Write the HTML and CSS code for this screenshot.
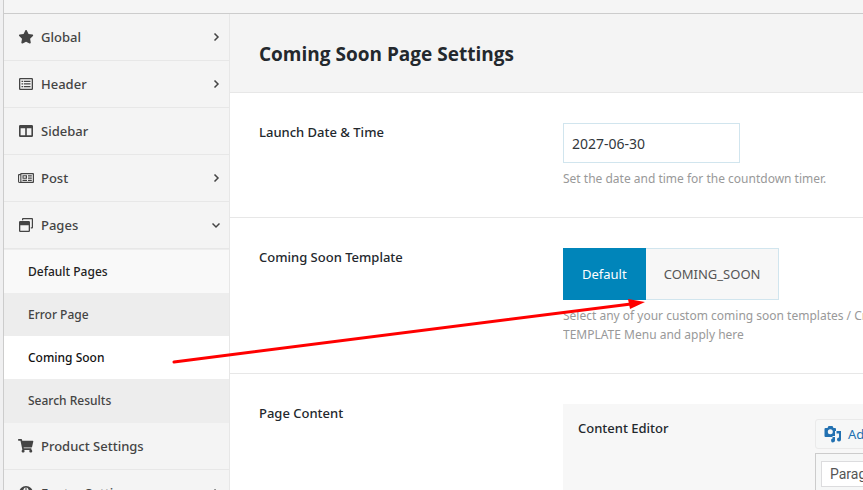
FILE: index.html
```html
<!DOCTYPE html>
<html lang="en">
<head>
    <meta charset="UTF-8">
    <meta name="viewport" content="width=device-width, initial-scale=1.0">
    <title>Coming Soon Page Settings</title>
    <link rel="stylesheet" href="styles.css">
</head>
<body>
    <div class="panel">
        <div class="topbar"></div>
        <div class="wrapper">
            <nav class="sidebar">
                <ul class="menu">
                    <li>
                        <a href="#">
                            <svg class="icon" viewBox="0 0 16 14"><path transform="translate(0.4 0) scale(0.0266)" d="M259.3 17.8L194 150.2 47.9 171.5c-26.2 3.8-36.7 36.1-17.7 54.6l105.7 103-25 145.5c-4.5 26.3 23.2 46 46.4 33.7L288 439.6l130.7 68.7c23.2 12.2 50.9-7.4 46.4-33.7l-25-145.5 105.7-103c19-18.5 8.5-50.8-17.7-54.6L382 150.2 316.7 17.8c-11.7-23.6-45.6-23.9-57.4 0z"/></svg>
                            Global
                            <svg class="arrow" viewBox="0 0 8 8"><path d="M2.5 0.500l3.500 3.500-3.500 3.500"/></svg>
                        </a>
                    </li>
                    <li>
                        <a href="#">
                            <svg class="icon" viewBox="0 0 16 14"><path fill-rule="evenodd" d="M2.2 1h11.6q1.2 0 1.2 1.2v9.6q0 1.2-1.2 1.2H2.2Q1 13 1 11.800V2.200Q1 1 2.200 1zM2.300 2.300v9.400h11.400V2.300zM3.500 3.700h1.700v1.300H3.500zM6 3.700h6.500v1.300H6zM3.500 6.300h1.700v1.300H3.500zM6 6.300h6.500v1.300H6zM3.500 9h1.700v1.300H3.500zM6 9h6.500v1.300H6z"/></svg>
                            Header
                            <svg class="arrow" viewBox="0 0 8 8"><path d="M2.5 0.500l3.500 3.500-3.500 3.500"/></svg>
                        </a>
                    </li>
                    <li>
                        <a href="#">
                            <svg class="icon" viewBox="0 0 16 14"><path fill-rule="evenodd" d="M2.300 1h11.400q1.300 0 1.300 1.300v9.400q0 1.300-1.300 1.300H2.300Q1 13 1 11.700V2.300Q1 1 2.300 1zM2.600 4.300v7h4.600v-7zM8.800 4.300v7h4.600v-7z"/></svg>
                            Sidebar
                        </a>
                    </li>
                    <li>
                        <a href="#">
                            <svg class="icon" viewBox="0 0 16 14"><path fill-rule="evenodd" d="M3 2h12q1 0 1 1v8q0 1-1 1H2Q0 12 0 10.500V4q0-1 1-1h1.200Q2.200 2 3 2zM3.400 3.200v7.600h11.400V3.200zM1.100 4.200v6.300q0 .6.600.6t.6-.6V4.200zM4.500 4.200H9v3.600H4.500zM5.600 5.200v1.500h2.200V5.200zM10 4.200h3.800v1.200H10zM10 6.600h3.800v1.200H10zM4.500 8.800H9v1.100H4.500zM10 8.800h3.800v1.100H10z"/></svg>
                            Post
                            <svg class="arrow" viewBox="0 0 8 8"><path d="M2.5 0.500l3.500 3.500-3.500 3.500"/></svg>
                        </a>
                    </li>
                    <li>
                        <a href="#">
                            <svg class="icon" viewBox="0 0 16 14"><path fill-rule="evenodd" d="M5 0h9q1 0 1 1v8.500q0 1-1 1h-1.200V9.300h1V1.200H5.200v1H4V1q0-1 1-1zM2.200 3h8.600Q12 3 12 4.200v8.600q0 1.200-1.200 1.200H2.200Q1 14 1 12.800V4.200Q1 3 2.200 3zM2.300 7.200v5.500h8.400V7.200z"/></svg>
                            Pages
                            <svg class="arrow" viewBox="0 0 8 8"><path d="M0.500 2.500l3.500 3.500 3.500-3.500"/></svg>
                        </a>
                        <ul class="submenu">
                            <li class="first"><a href="#">Default Pages</a></li>
                            <li><a href="#">Error Page</a></li>
                            <li class="active"><a href="#">Coming Soon</a></li>
                            <li><a href="#">Search Results</a></li>
                        </ul>
                    </li>
                    <li>
                        <a href="#">
                            <svg class="icon" viewBox="0 0 16 14"><path transform="scale(0.0266)" d="M528.12 301.319l47.273-208C578.806 78.301 567.391 64 551.99 64H159.208l-9.166-44.81C147.758 8.021 137.93 0 126.529 0H24C10.745 0 0 10.745 0 24v16c0 13.255 10.745 24 24 24h69.883l70.248 343.435C147.325 417.1 136 435.222 136 456c0 30.928 25.072 56 56 56s56-25.072 56-56c0-15.674-6.447-29.835-16.824-40h209.647C430.447 426.165 424 440.326 424 456c0 30.928 25.072 56 56 56s56-25.072 56-56c0-22.172-12.888-41.332-31.579-50.405l5.517-24.276c3.413-15.018-8.002-29.319-23.403-29.319H218.117l-6.545-32h293.145c11.206 0 20.92-7.754 23.403-18.681z"/></svg>
                            Product Settings
                        </a>
                    </li>
                    <li>
                        <a href="#">
                            <svg class="icon" viewBox="0 0 16 14"><path fill-rule="evenodd" d="M8 0a7 7 0 1 1 0 14A7 7 0 0 1 8 0zM7.500 1.200Q5.500 2 5 5h2.500zM8.500 1.200V5H11Q10.500 2 8.500 1.200z"/></svg>
                            Footer Settings
                            <svg class="arrow" viewBox="0 0 8 8"><path d="M2.5 0.500l3.500 3.500-3.500 3.500"/></svg>
                        </a>
                    </li>
                </ul>
            </nav>
            <main class="content">
                <div class="title">
                    <h1>Coming Soon Page Settings</h1>
                </div>
                <div class="field">
                    <label class="field-label" for="launchDate">Launch Date &amp; Time</label>
                    <div class="field-body">
                        <input type="text" class="date" id="launchDate" value="2027-06-30">
                        <p class="desc">Set the date and time for the countdown timer.</p>
                    </div>
                </div>
                <div class="field">
                    <div class="field-label" id="templateLabel">Coming Soon Template</div>
                    <div class="field-body">
                        <div class="button-set" role="group" aria-labelledby="templateLabel">
                            <button type="button" class="selected">Default</button>
                            <button type="button">COMING_SOON</button>
                        </div>
                        <p class="desc">Select any of your custom coming soon templates / Create<br>TEMPLATE Menu and apply here</p>
                    </div>
                </div>
                <div class="field">
                    <div class="field-label">Page Content</div>
                    <div class="field-body editor-box">
                        <label class="editor-label" for="format">Content Editor</label>
                        <div class="editor">
                            <button type="button" class="add-media">
                                <svg viewBox="0 0 18 18"><path fill-rule="evenodd" d="M1.500 3h2l1-2h4l1 2h1.500q1 0 1 1v2H11v6H1.500q-1 0-1-1V4q0-1 1-1zM6.300 4.200a2.500 2.500 0 1 0 0 5 2.500 2.500 0 0 0 0-5zM12.500 6H17v8.500a2 2 0 1 1-2-2V8.500h-2.500zM8.500 11H11v4a2 2 0 1 1-2.500-1.500z"/></svg>
                                Add Media
                            </button>
                            <div class="toolbar">
                                <select id="format">
                                    <option>Paragraph</option>
                                </select>
                            </div>
                        </div>
                    </div>
                </div>
            </main>
        </div>
        <!-- pointer from the menu item to the template buttons -->
        <svg class="pointer" viewBox="0 0 476 68">
            <path class="line" d="M3 64L460 6"/>
            <path class="head" d="M474 4L457 1L459 11z"/>
        </svg>
    </div>
</body>
</html>
```
FILE: styles.css
```css
* {
    box-sizing: border-box;
}
body {
    margin: 0;
    height: 100vh;
    overflow: hidden;
    background-color: #f0f0f1;
    font-family: "Segoe UI", "Noto Sans", sans-serif;
    font-size: 13px;
    color: #23282d;
}
ul {
    list-style: none;
    margin: 0;
    padding: 0;
}
a {
    color: inherit;
    text-decoration: none;
}
.panel {
    display: flex;
    flex-direction: column;
    position: relative;
    height: 100vh;
    margin-left: 3px;
    border-left: 1px solid #ccc;
}
.topbar {
    flex: 0 0 14px;
    background-color: #f5f5f5;
    border-bottom: 1px solid #ccc;
}
.wrapper {
    display: flex;
    flex: 1;
    min-height: 0;
    overflow: hidden;
}
.sidebar {
    flex: 0 0 226px;
    background-color: #f4f4f4;
    border-right: 1px solid #e7e7e7;
}
.menu > li > a {
    display: flex;
    align-items: center;
    gap: 7px;
    height: 47px;
    padding: 0 9px 0 14px;
    border-bottom: 1px solid #e7e7e7;
    color: #444;
    font-weight: 500;
}
.icon {
    width: 16px;
    height: 14px;
    fill: #444;
}
.arrow {
    width: 8px;
    height: 8px;
    margin-left: auto;
    fill: none;
    stroke: #444;
    stroke-width: 1.5;
}
.submenu {
    padding: 1px 0;
    background-color: #ededed;
}
.submenu a {
    display: flex;
    align-items: center;
    height: 43px;
    padding-left: 24px;
    font-size: 12px;
    font-weight: 500;
    color: #444;
}
.submenu .first a {
    background-color: #f9f9f9;
    color: #222;
}
.submenu .active a {
    background-color: #fff;
    color: #111;
}
.content {
    flex: 1;
    min-width: 0;
    background-color: #fff;
}
.title {
    padding: 27px 29px 24px;
    background-color: #f4f4f4;
    border-bottom: 1px solid #e7e7e7;
}
.title h1 {
    margin: 0;
    font-family: "Segoe UI", "Open Sans", sans-serif;
    font-size: 19px;
    line-height: 27px;
    font-weight: 700;
}
.field {
    display: flex;
    padding: 30px 0 29px 29px;
    border-bottom: 1px solid #e7e7e7;
}
.field-label {
    flex: 0 0 304px;
    line-height: 18px;
    font-weight: 500;
}
.field-body {
    flex: 1;
    min-width: 0;
    overflow: hidden;
}
.date {
    display: block;
    width: 177px;
    height: 40px;
    padding: 0 8px;
    border: 1px solid #d1e5ee;
    background-color: #fff;
    font: inherit;
    font-size: 14px;
    color: #32373c;
}
.desc {
    margin: 6px 0 0;
    font-size: 12px;
    line-height: 19px;
    color: #999;
    white-space: nowrap;
}
.button-set {
    display: flex;
}
.button-set button {
    height: 52px;
    padding: 0 18px;
    border: 1px solid #d1e5ee;
    border-left: 0;
    background-color: #f7f7f7;
    font: inherit;
    color: #555;
}
.button-set .selected {
    border: 1px solid #0085ba;
    background-color: #0085ba;
    color: #fff;
}
.editor-box {
    display: flex;
    min-height: 120px;
    padding: 15px;
    padding-right: 0;
    background-color: #f7f7f7;
}
.editor-label {
    flex: 0 0 237px;
    line-height: 18px;
    font-weight: 500;
}
.editor {
    flex: 1;
    min-width: 0;
}
.add-media {
    display: flex;
    align-items: center;
    gap: 6px;
    height: 30px;
    padding: 0 8px;
    border: 1px solid #eaeaea;
    border-radius: 3px;
    background-color: #f6f7f7;
    font: inherit;
    color: #2271b1;
    white-space: nowrap;
}
.add-media svg {
    flex: none;
    width: 18px;
    height: 18px;
    fill: #2271b1;
}
.toolbar {
    height: 60px;
    margin-top: 4px;
    padding: 7px 5px;
    border: 1px solid #ccc;
    border-right: 0;
    background-color: #f6f7f7;
}
.toolbar select {
    appearance: none;
    width: 130px;
    height: 26px;
    padding: 0 8px;
    border: 1px solid #dcdcde;
    border-radius: 0;
    background-color: #fff;
    font-family: Roboto, sans-serif;
    font-size: 14px;
    color: #555;
}
.pointer {
    position: absolute;
    left: 167px;
    top: 298px;
    width: 476px;
    height: 68px;
    pointer-events: none;
}
.pointer .line {
    stroke: #f00;
    stroke-width: 3;
    stroke-linecap: round;
}
.pointer .head {
    fill: #f00;
}
```
